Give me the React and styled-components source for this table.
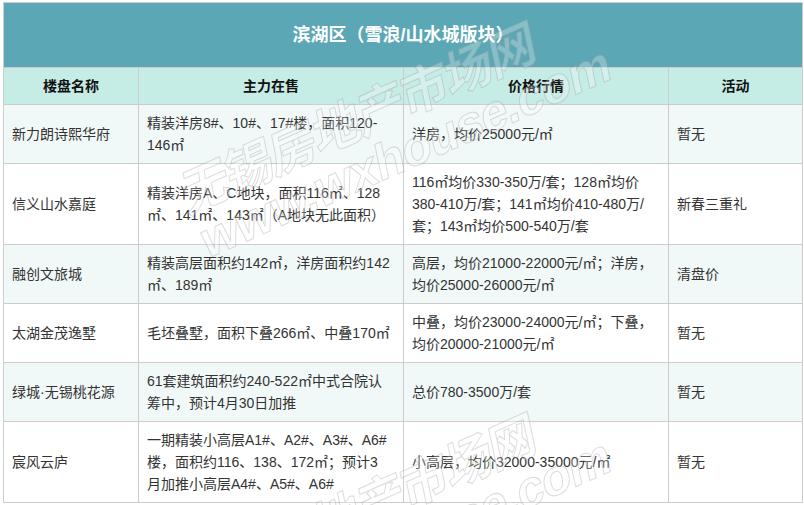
import React from 'react';
import styled, { createGlobalStyle } from 'styled-components';

const rows = [
  {
    name: '新力朗诗熙华府',
    main: ['精装洋房8#、10#、17#楼，面积120-', '146㎡'],
    price: ['洋房，均价25000元/㎡'],
    event: '暂无',
  },
  {
    name: '信义山水嘉庭',
    main: ['精装洋房A、C地块，面积116㎡、128', '㎡、141㎡、143㎡（A地块无此面积）'],
    price: ['116㎡均价330-350万/套；128㎡均价', '380-410万/套；141㎡均价410-480万/', '套；143㎡均价500-540万/套'],
    event: '新春三重礼',
  },
  {
    name: '融创文旅城',
    main: ['精装高层面积约142㎡，洋房面积约142', '㎡、189㎡'],
    price: ['高层，均价21000-22000元/㎡；洋房，', '均价25000-26000元/㎡'],
    event: '清盘价',
  },
  {
    name: '太湖金茂逸墅',
    main: ['毛坯叠墅，面积下叠266㎡、中叠170㎡'],
    price: ['中叠，均价23000-24000元/㎡；下叠，', '均价20000-21000元/㎡'],
    event: '暂无',
  },
  {
    name: '绿城·无锡桃花源',
    main: ['61套建筑面积约240-522㎡中式合院认', '筹中，预计4月30日加推'],
    price: ['总价780-3500万/套'],
    event: '暂无',
  },
  {
    name: '宸风云庐',
    main: ['一期精装小高层A1#、A2#、A3#、A6#', '楼，面积约116、138、172㎡；预计3', '月加推小高层A4#、A5#、A6#'],
    price: ['小高层，均价32000-35000元/㎡'],
    event: '暂无',
  },
];

const Lines = ({ items }) =>
  items.map((line, i) => (
    <React.Fragment key={i}>
      {i > 0 && <br />}
      {line}
    </React.Fragment>
  ));

const Mark = ({ top }) => (
  <Watermark style={{ top }}>
    <MarkName>无锡房地产市场网</MarkName>
    <MarkUrl>www.wxhouse.com</MarkUrl>
  </Watermark>
);

export default function App() {
  return (
    <Page>
      <GlobalStyle />
      <Table>
        <colgroup>
          <col style={{ width: 135 }} />
          <col style={{ width: 265 }} />
          <col style={{ width: 265 }} />
          <col style={{ width: 134 }} />
        </colgroup>
        <thead>
          <tr>
            <Title colSpan={4}>滨湖区（雪浪/山水城版块）</Title>
          </tr>
          <tr>
            <Head>楼盘名称</Head>
            <Head>主力在售</Head>
            <Head>价格行情</Head>
            <Head>活动</Head>
          </tr>
        </thead>
        <tbody>
          {rows.map((r, i) => (
            <Row key={r.name} $tinted={i % 2 === 0}>
              <Cell>{r.name}</Cell>
              <Cell><Lines items={r.main} /></Cell>
              <Cell><Lines items={r.price} /></Cell>
              <Cell>{r.event}</Cell>
            </Row>
          ))}
        </tbody>
      </Table>
      <Mark top={126} />
      <Mark top={518} />
    </Page>
  );
}

const GlobalStyle = createGlobalStyle`
  body {
    margin: 0;
    background: #ffffff;
    font-family: "Liberation Sans", "Noto Sans CJK SC", sans-serif;
  }
`;

const Page = styled.div`
  position: relative;
  padding: 2px 2px 0 3px;
  height: 503px;
  overflow: hidden;
`;

const Table = styled.table`
  width: 800px;
  border-collapse: collapse;
  table-layout: fixed;
  font-size: 14px;
  line-height: 22px;
  color: #333333;
`;

const Title = styled.th`
  height: 64px;
  padding: 0;
  background: #5ba7b5;
  border: 1px solid #cccccc;
  color: #ffffff;
  font-size: 18px;
  font-weight: bold;
  text-align: center;
  vertical-align: middle;
`;

const Head = styled.th`
  padding: 7px 8px;
  background: #c6ece6;
  border: 1px solid #cccccc;
  color: #111111;
  font-weight: bold;
  text-align: center;
`;

const Row = styled.tr`
  background: ${p => (p.$tinted ? '#f1f9f8' : '#ffffff')};
`;

const Cell = styled.td`
  padding: 7px 7px 7px 8px;
  border: 1px solid #cccccc;
  vertical-align: middle;
  text-align: left;
  white-space: nowrap;
`;

const Watermark = styled.div`
  position: absolute;
  left: 395px;
  display: flex;
  flex-direction: column;
  align-items: flex-start;
  transform: translate(-50%, -50%) rotate(-24deg) skewX(-12deg);
  pointer-events: none;
  white-space: nowrap;
  opacity: 0.45;
`;

const MarkName = styled.div`
  font-family: "Noto Sans CJK SC", sans-serif;
  font-size: 50px;
  font-weight: bold;
  line-height: 56px;
  letter-spacing: -2px;
  color: rgba(255, 255, 255, 0.6);
  -webkit-text-stroke: 1px rgba(160, 160, 160, 0.8);
`;

const MarkUrl = styled.div`
  font-family: "Liberation Sans", sans-serif;
  font-size: 50px;
  font-weight: bold;
  line-height: 52px;
  margin-left: 10px;
  letter-spacing: -1px;
  color: rgba(255, 255, 255, 0.6);
  -webkit-text-stroke: 1px rgba(160, 160, 160, 0.8);
`;
